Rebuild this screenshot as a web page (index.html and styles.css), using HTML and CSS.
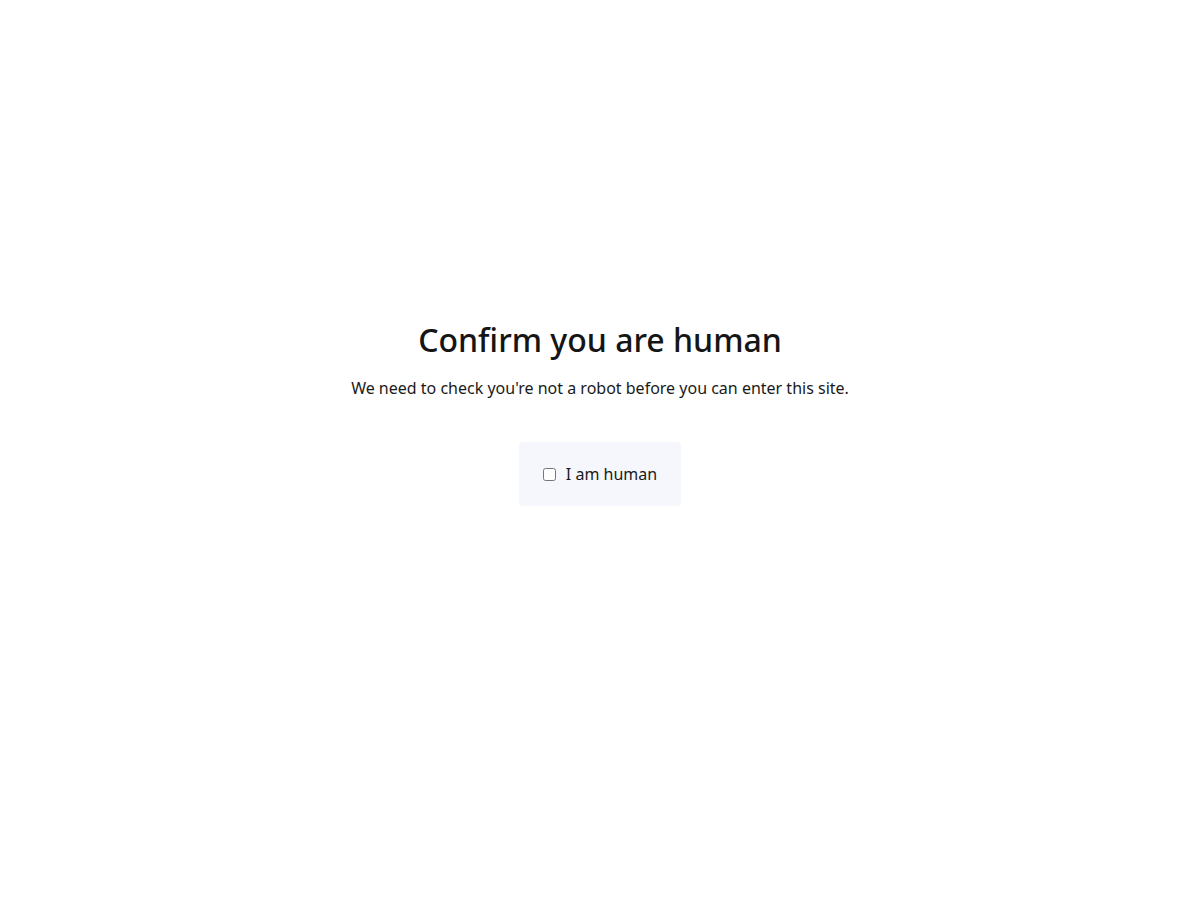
FILE: index.html
```html
<!DOCTYPE html>
<html lang="en">
<head>
<meta charset="utf-8">
<title>Confirm you are human</title>
<link rel="stylesheet" href="styles.css">
</head>
<body>
<main class="page">
  <h1 class="title">Confirm you are human</h1>
  <p class="subtitle">We need to check you're not a robot before you can enter this site.</p>
  <label class="check">
    <input type="checkbox" class="check-box">
    <span class="check-label">I am human</span>
  </label>
</main>
</body>
</html>
```

FILE: styles.css
```css
html, body {
  margin: 0;
  padding: 0;
  background: #ffffff;
}
body {
  font-family: "Noto Sans", "DejaVu Sans", sans-serif;
  color: #111111;
}
.page {
  height: 900px;
  display: flex;
  flex-direction: column;
  align-items: center;
  padding-top: 320px;
  box-sizing: border-box;
}
.title {
  margin: 0;
  font-size: 32px;
  font-weight: 500;
  line-height: 40px;
  color: #151515;
}
.subtitle {
  margin: 16px 0 0;
  font-size: 16px;
  line-height: 24px;
  color: #1a1a1a;
}
.check {
  margin-top: 42px;
  display: flex;
  align-items: center;
  gap: 10px;
  padding: 20px 24px;
  background: #f5f7fc;
  border-radius: 4px;
}
.check-box {
  margin: 0;
  width: 13px;
  height: 13px;
}
.check-label {
  font-size: 16px;
  line-height: 24px;
  color: #1a1a1a;
}
```
